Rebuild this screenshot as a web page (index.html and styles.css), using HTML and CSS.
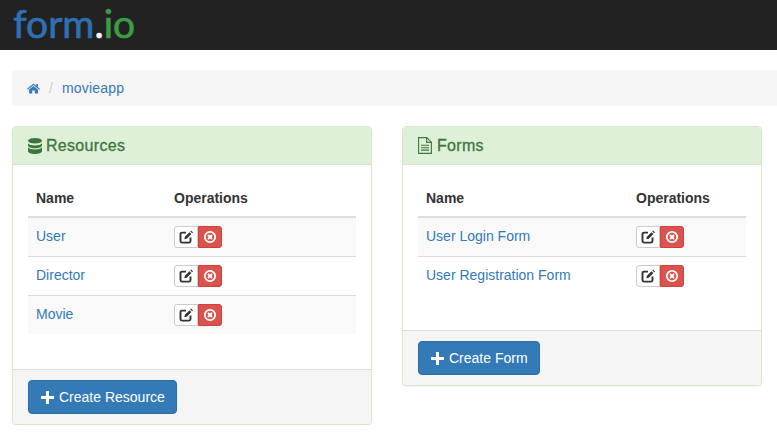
FILE: index.html
```html
<!DOCTYPE html>
<html lang="en">
<head>
    <meta charset="UTF-8">
    <title>form.io</title>
    <link rel="stylesheet" href="styles.css">
</head>
<body>

<div class="navbar">
    <a class="logo" href="#"><span class="logo-blue">form</span><span class="logo-dot">.</span><span class="logo-green">io</span></a>
</div>

<div class="breadcrumb">
    <a href="#" class="home-link">
        <svg class="icon-home" viewBox="0 0 14 12"><path d="M7 .6 0 6.400l.7.9L7 2.100l6.300 5.200.7-.9-2.200-1.800V1.200h-1.800v1.700zM2.200 7.200V11.500h3.400V8.300h2.800v3.200h3.400V7.200L7 3.300z"/></svg>
    </a>
    <span class="crumb-sep">/</span>
    <a href="#" class="crumb-link">movieapp</a>
</div>

<div class="panels">
    <div class="panel">
        <div class="panel-heading">
            <svg class="icon-db" viewBox="0 0 14 16"><ellipse cx="7" cy="2.800" rx="7" ry="2.800"/><path d="M0 5.200c1 1.500 3.800 2.200 7 2.200s6-.7 7-2.200v2.300c0 1.500-3.100 2.700-7 2.700S0 9 0 7.500zM0 9.300c1 1.500 3.800 2.200 7 2.200s6-.7 7-2.200v3.900C14 14.800 10.900 16 7 16s-7-1.200-7-2.800z"/></svg>
            <span class="panel-title">Resources</span>
        </div>
        <div class="panel-body">
            <table class="table">
                <thead>
                    <tr><th class="col-name">Name</th><th>Operations</th></tr>
                </thead>
                <tbody>
                    <tr>
                        <td class="name-cell"><a href="#">User</a></td>
                        <td><div class="ops"><a class="btn-edit" href="#"><svg viewBox="0 0 14 14"><path class="edit-box" d="M7 2.600H3A1.500 1.500 0 0 0 1.500 4.100v7A1.500 1.500 0 0 0 3 12.600h7a1.500 1.500 0 0 0 1.500-1.500V7.500"/><path class="edit-pen" d="m5.300 9.300.6-2.500 4.600-4.600 1.900 1.900-4.600 4.600zM11.300 1.400l.8-.8 1.900 1.900-.8.8z"/></svg></a><a class="btn-del" href="#"><svg viewBox="0 0 14 14"><circle class="del-ring" cx="7" cy="7" r="5.200"/><path class="del-x" d="m5 5 4 4M9 5l-4 4"/></svg></a></div></td>
                    </tr>
                    <tr>
                        <td class="name-cell"><a href="#">Director</a></td>
                        <td><div class="ops"><a class="btn-edit" href="#"><svg viewBox="0 0 14 14"><path class="edit-box" d="M7 2.600H3A1.500 1.500 0 0 0 1.500 4.100v7A1.500 1.500 0 0 0 3 12.600h7a1.500 1.500 0 0 0 1.500-1.500V7.500"/><path class="edit-pen" d="m5.300 9.300.6-2.500 4.600-4.600 1.900 1.900-4.600 4.600zM11.300 1.400l.8-.8 1.900 1.900-.8.8z"/></svg></a><a class="btn-del" href="#"><svg viewBox="0 0 14 14"><circle class="del-ring" cx="7" cy="7" r="5.200"/><path class="del-x" d="m5 5 4 4M9 5l-4 4"/></svg></a></div></td>
                    </tr>
                    <tr>
                        <td class="name-cell"><a href="#">Movie</a></td>
                        <td><div class="ops"><a class="btn-edit" href="#"><svg viewBox="0 0 14 14"><path class="edit-box" d="M7 2.600H3A1.500 1.500 0 0 0 1.500 4.100v7A1.500 1.500 0 0 0 3 12.600h7a1.500 1.500 0 0 0 1.500-1.500V7.500"/><path class="edit-pen" d="m5.300 9.300.6-2.500 4.600-4.600 1.900 1.900-4.600 4.600zM11.300 1.400l.8-.8 1.900 1.900-.8.8z"/></svg></a><a class="btn-del" href="#"><svg viewBox="0 0 14 14"><circle class="del-ring" cx="7" cy="7" r="5.200"/><path class="del-x" d="m5 5 4 4M9 5l-4 4"/></svg></a></div></td>
                    </tr>
                </tbody>
            </table>
        </div>
        <div class="panel-footer">
            <a class="btn-primary" href="#"><svg class="icon-plus" viewBox="0 0 13 13"><path d="M5 0h3v5h5v3H8v5H5V8H0V5h5z"/></svg>Create Resource</a>
        </div>
    </div>

    <div class="panel">
        <div class="panel-heading">
            <svg class="icon-file" viewBox="0 0 14 17"><path class="file-outline" d="M.6.6h8.200l4.600 4.600v11.200H.6zM8.600.8v4.600h4.600"/><path class="file-lines" d="M3 8.300h8M3 10.700h8M3 13.100h8"/></svg>
            <span class="panel-title">Forms</span>
        </div>
        <div class="panel-body">
            <table class="table">
                <thead>
                    <tr><th class="col-name-wide">Name</th><th>Operations</th></tr>
                </thead>
                <tbody>
                    <tr>
                        <td class="name-cell"><a href="#">User Login Form</a></td>
                        <td><div class="ops"><a class="btn-edit" href="#"><svg viewBox="0 0 14 14"><path class="edit-box" d="M7 2.600H3A1.500 1.500 0 0 0 1.500 4.100v7A1.500 1.500 0 0 0 3 12.600h7a1.500 1.500 0 0 0 1.500-1.500V7.500"/><path class="edit-pen" d="m5.300 9.300.6-2.500 4.600-4.600 1.900 1.900-4.600 4.600zM11.300 1.400l.8-.8 1.900 1.900-.8.8z"/></svg></a><a class="btn-del" href="#"><svg viewBox="0 0 14 14"><circle class="del-ring" cx="7" cy="7" r="5.200"/><path class="del-x" d="m5 5 4 4M9 5l-4 4"/></svg></a></div></td>
                    </tr>
                    <tr>
                        <td class="name-cell"><a href="#">User Registration Form</a></td>
                        <td><div class="ops"><a class="btn-edit" href="#"><svg viewBox="0 0 14 14"><path class="edit-box" d="M7 2.600H3A1.500 1.500 0 0 0 1.500 4.100v7A1.500 1.500 0 0 0 3 12.600h7a1.500 1.500 0 0 0 1.500-1.500V7.500"/><path class="edit-pen" d="m5.300 9.300.6-2.500 4.600-4.600 1.900 1.900-4.600 4.600zM11.300 1.400l.8-.8 1.900 1.900-.8.8z"/></svg></a><a class="btn-del" href="#"><svg viewBox="0 0 14 14"><circle class="del-ring" cx="7" cy="7" r="5.200"/><path class="del-x" d="m5 5 4 4M9 5l-4 4"/></svg></a></div></td>
                    </tr>
                </tbody>
            </table>
        </div>
        <div class="panel-footer">
            <a class="btn-primary" href="#"><svg class="icon-plus" viewBox="0 0 13 13"><path d="M5 0h3v5h5v3H8v5H5V8H0V5h5z"/></svg>Create Form</a>
        </div>
    </div>
</div>

</body>
</html>
```

FILE: styles.css
```css
html, body {
    overflow: hidden;
}

body {
    margin: 0;
    font-family: "Liberation Sans", Arial, sans-serif;
    font-size: 14px;
    line-height: 20px;
    color: #333;
    background: #fff;
}

a {
    color: #337ab7;
    text-decoration: none;
}

.navbar {
    height: 50px;
    background-color: #222;
    padding-left: 13px;
    box-sizing: border-box;
}

.logo {
    display: block;
    font-family: Lato, sans-serif;
    font-size: 39px;
    line-height: 47px;
    -webkit-text-stroke: 0.7px;
}

.logo-blue {
    color: #2f6fb3;
}

.logo-dot {
    color: #fff;
}

.logo-green {
    color: #3c9c47;
}

.breadcrumb {
    display: flex;
    align-items: center;
    height: 36px;
    margin: 20px -10px 20px 12px;
    padding: 0 15px;
    background-color: #f5f5f5;
    border-radius: 4px;
}

.home-link {
    display: flex;
}

.icon-home {
    width: 13px;
    height: 11px;
    fill: #337ab7;
}

.crumb-sep {
    color: #ccc;
    padding: 0 9px;
}

.crumb-link {
    letter-spacing: 0.2px;
}

.panels {
    display: flex;
    align-items: flex-start;
    gap: 30px;
    padding-left: 12px;
}

.panel {
    width: 360px;
    box-sizing: border-box;
    border: 1px solid #d6e9c6;
    border-radius: 4px;
    box-shadow: 0 1px 1px rgba(0, 0, 0, 0.05);
}

.panel-heading {
    display: flex;
    align-items: center;
    gap: 4px;
    height: 38px;
    box-sizing: border-box;
    padding: 0 15px;
    background-color: #dff0d8;
    border-bottom: 1px solid #d6e9c6;
    border-radius: 3px 3px 0 0;
    color: #3c763d;
}

.panel-title {
    padding-top: 1px;
    font-size: 16px;
    letter-spacing: 0.3px;
    -webkit-text-stroke: 0.3px #3c763d;
}

.icon-db {
    width: 14px;
    height: 16px;
    fill: #3c763d;
}

.icon-file {
    width: 14px;
    height: 17px;
    margin-right: 1px;
}

.file-outline,
.file-lines {
    fill: none;
    stroke: #3c763d;
    stroke-width: 1.1;
}

.panel-body {
    padding: 15px 15px 35px;
}

.table {
    width: 100%;
    border-collapse: collapse;
}

.table th {
    height: 35px;
    padding: 0 8px 1px;
    text-align: left;
    border-bottom: 2px solid #ddd;
}

.col-name {
    width: 122px;
}

.col-name-wide {
    width: 194px;
}

.table td {
    height: 38px;
    padding: 0 8px;
    border-top: 1px solid #ddd;
}

.table td.name-cell {
    height: 36px;
    padding-bottom: 2px;
}

.table tbody tr:first-child td {
    border-top: 0;
}

.table tbody tr:nth-child(odd) td {
    background-color: #f9f9f9;
}

.ops {
    display: flex;
}

.btn-edit,
.btn-del {
    display: flex;
    align-items: center;
    justify-content: center;
    width: 24px;
    height: 22px;
    box-sizing: border-box;
    border: 1px solid;
}

.btn-edit {
    background: #fff;
    border-color: #ccc;
    border-radius: 3px 0 0 3px;
}

.btn-del {
    background: #d9534f;
    border-color: #d43f3a;
    border-radius: 0 3px 3px 0;
}

.btn-edit svg,
.btn-del svg {
    width: 14px;
    height: 14px;
}

.edit-box {
    fill: none;
    stroke: #333;
    stroke-width: 1.9;
}

.edit-pen {
    fill: #333;
}

.del-ring,
.del-x {
    fill: none;
    stroke: #fff;
    stroke-width: 1.8;
}

.panel-footer {
    padding: 10px 15px;
    background-color: #f5f5f5;
    border-top: 1px solid #ddd;
    border-radius: 0 0 3px 3px;
}

.btn-primary {
    display: inline-flex;
    align-items: center;
    gap: 5px;
    height: 34px;
    box-sizing: border-box;
    padding: 0 11px 0 12px;
    color: #fff;
    background-color: #337ab7;
    border: 1px solid #2e6da4;
    border-radius: 4px;
}

.icon-plus {
    width: 13px;
    height: 13px;
    fill: #fff;
}
```
